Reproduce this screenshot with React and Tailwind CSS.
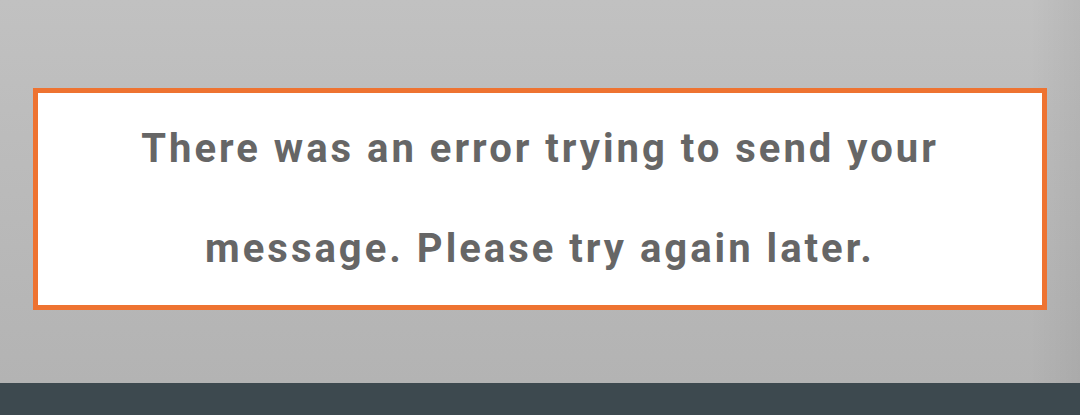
import React from "react";

const ErrorNotice = ({ children }) => (
  <div className="h-[222px] border-[5px] border-[#ee7331] bg-white flex items-center justify-center">
    <p className="text-center text-[40px] leading-[100px] font-bold tracking-[3px] text-[#666666] font-['Roboto',sans-serif] max-w-[860px]">
      {children}
    </p>
  </div>
);

export default function App() {
  return (
    <div className="w-[1080px] h-[415px] flex flex-col overflow-hidden">
      <div className="h-[383px] pt-[88px] pl-[33px] pr-[33px] bg-[linear-gradient(to_left,rgba(0,0,0,0.05),transparent_50px),linear-gradient(to_bottom,#c1c1c1,#b3b3b3)]">
        <ErrorNotice>
          There was an error trying to send your message. Please try again later.
        </ErrorNotice>
      </div>
      <div className="flex-1 bg-[#3d494f]" />
    </div>
  );
}
